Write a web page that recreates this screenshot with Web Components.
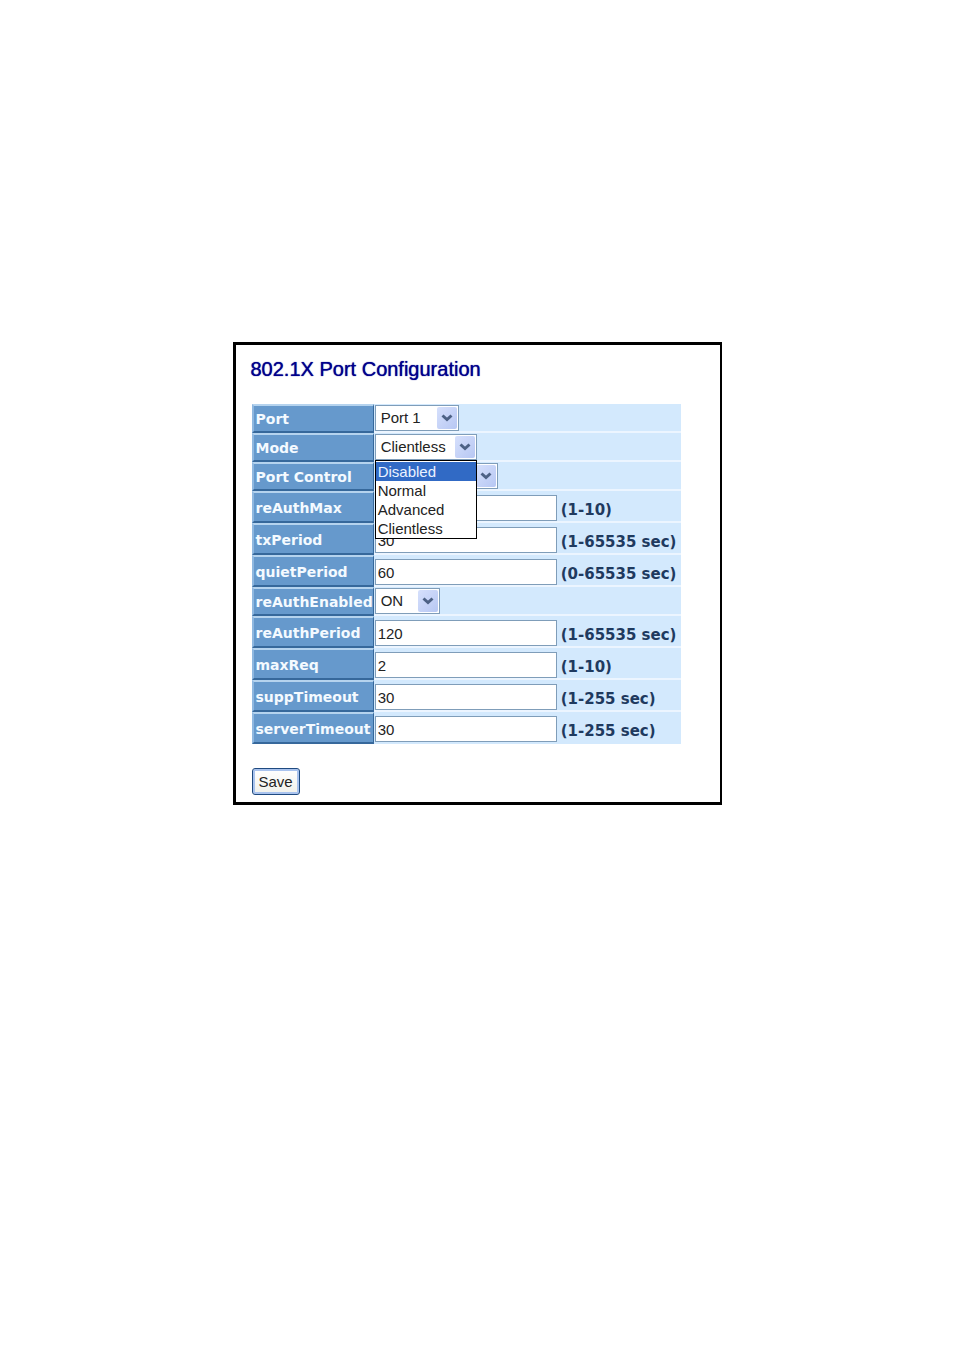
<!DOCTYPE html>
<html lang="en">
<head>
<meta charset="utf-8">
<meta name="viewport" content="width=device-width, initial-scale=1">
<title>802.1X Port Configuration</title>
<style>
    body {
        margin: 0;
        padding: 342px 16px 0;
        background: #fff;
        color: #222;
        font: 15px/18px "Liberation Sans", Arial, sans-serif;
    }
</style>
</head>
<body>
<config-panel heading="802.1X Port Configuration">
    <port-settings></port-settings>
    <save-button slot="actions">Save</save-button>
</config-panel>

<script>
class ConfigPanel extends HTMLElement {
    constructor() {
        super();
        this.attachShadow({ mode: 'open' });
    }

    connectedCallback() {
        this.shadowRoot.innerHTML = `
            <style>
                :host {
                    display: flex;
                    flex-direction: column;
                    box-sizing: border-box;
                    max-width: 489px;
                    margin: 0 auto;
                    padding: 12px 16px 7px;
                    border: 3px solid #000;
                    border-right-width: 2px;
                }
                h1 {
                    margin: 0 0 23px -1px;
                    font-size: 20px;
                    line-height: 24px;
                    font-weight: normal;
                    color: #00008b;
                    text-shadow: 0 0 1px #00008b;
                }
                .actions { margin-top: 24px; }
            </style>
            <h1>${this.getAttribute('heading')}</h1>
            <slot></slot>
            <div class="actions"><slot name="actions"></slot></div>
        `;
    }
}
customElements.define('config-panel', ConfigPanel);

class PortSettings extends HTMLElement {
    constructor() {
        super();
        this.attachShadow({ mode: 'open' });

        // size is the select width class, hint is the allowed range
        this.fields = [
            { name: 'Port', type: 'select', value: 'Port 1', size: 'medium' },
            { name: 'Mode', type: 'select', value: 'Clientless', size: 'large', open: true },
            { name: 'Port Control', type: 'select', value: '', size: 'wide' },
            { name: 'reAuthMax', type: 'text', value: '', hint: '(1-10)' },
            { name: 'txPeriod', type: 'text', value: '30', hint: '(1-65535 sec)' },
            { name: 'quietPeriod', type: 'text', value: '60', hint: '(0-65535 sec)' },
            { name: 'reAuthEnabled', type: 'select', value: 'ON', size: 'small' },
            { name: 'reAuthPeriod', type: 'text', value: '120', hint: '(1-65535 sec)' },
            { name: 'maxReq', type: 'text', value: '2', hint: '(1-10)' },
            { name: 'suppTimeout', type: 'text', value: '30', hint: '(1-255 sec)' },
            { name: 'serverTimeout', type: 'text', value: '30', hint: '(1-255 sec)' }
        ];
    }

    connectedCallback() { this.render(); }

    renderSelect(field, id) {
        const list = field.open
            ? '<option-list options="Disabled,Normal,Advanced,Clientless" active="Disabled"></option-list>'
            : '';
        return `
            <div class="select ${field.size}">
                <select id="${id}"><option>${field.value}</option></select>
                <svg viewBox="0 0 20 22" aria-hidden="true">
                    <defs>
                        <linearGradient id="face" x1="0" y1="0" x2="1" y2="1">
                            <stop offset="0" stop-color="#d6e0fc"/>
                            <stop offset="1" stop-color="#b7c7f3"/>
                        </linearGradient>
                    </defs>
                    <rect x="0" y="0" width="20" height="22" rx="2" fill="url(#face)"/>
                    <path d="M5.5 8.5 L10 12.5 L14.5 8.5" fill="none" stroke="#4d6185" stroke-width="3"/>
                </svg>
                ${list}
            </div>`;
    }

    renderText(field, id) {
        return `
            <div class="text">
                <input id="${id}" type="text" value="${field.value}" aria-describedby="${id}-hint">
                <span class="hint" id="${id}-hint">${field.hint}</span>
            </div>`;
    }

    render() {
        const rows = this.fields.map((field, idx) => {
            const id = `field-${idx}`;
            const control = field.type === 'select'
                ? this.renderSelect(field, id)
                : this.renderText(field, id);
            return `
                <tr class="${field.type}-row">
                    <th scope="row"><label for="${id}">${field.name}</label></th>
                    <td>${control}</td>
                </tr>`;
        }).join('');

        this.shadowRoot.innerHTML = `
            <style>
                :host { display: block; }

                table {
                    width: 429px;
                    max-width: 100%;
                    border-collapse: separate;
                    border-spacing: 0;
                }
                .select-row { height: 29px; }
                .text-row { height: 32px; }

                th, td { box-sizing: border-box; }
                th {
                    width: 120px;
                    padding: 0 0 0 2px;
                    border: 2px solid;
                    border-color: #b5d3ee #36689b #36689b #8fb8e0;
                    border-right-width: 1px;
                    background: #6699cc;
                    color: #f4faff;
                    font: bold 14px/18px "DejaVu Sans", Verdana, sans-serif;
                    text-align: left;
                    white-space: nowrap;
                }
                td {
                    padding: 0 0 0 1px;
                    border-bottom: 2px solid #ecf5ff;
                    background: #d3e9fd;
                }
                .text-row th { padding-top: 2px; }
                .text-row td { padding-top: 4px; }
                tr:last-child td { border-bottom-color: #d3e9fd; }

                /* the arrow face shares the last grid cell with the select */
                .select {
                    position: relative;
                    display: grid;
                    grid-template-columns: 1fr 22px;
                    align-items: center;
                    height: 26px;
                }
                .small { width: 65px; }
                .medium { width: 84px; }
                .large { width: 102px; }
                .wide { width: 123px; }

                select, input {
                    box-sizing: border-box;
                    height: 26px;
                    margin: 0;
                    border: 1px solid #7f9db9;
                    border-radius: 0;
                    background: #fff;
                    color: #222;
                    font: inherit;
                }
                select {
                    grid-area: 1 / 1 / 2 / 3;
                    width: 100%;
                    padding: 0 22px 0 5px;
                    appearance: none;
                }
                svg {
                    grid-area: 1 / 2;
                    z-index: 1;
                    width: 20px;
                    height: 22px;
                    pointer-events: none;
                }

                .text { display: flex; align-items: center; gap: 4px; }
                input { width: 182px; min-width: 0; padding: 0 2px; }
                .hint {
                    padding-top: 4px;
                    color: #1f3a5f;
                    font: bold 15px/18px "DejaVu Sans", Verdana, sans-serif;
                    white-space: nowrap;
                }
            </style>
            <table><tbody>${rows}</tbody></table>
        `;
    }
}
customElements.define('port-settings', PortSettings);

class OptionList extends HTMLElement {
    constructor() {
        super();
        this.attachShadow({ mode: 'open' });
    }

    connectedCallback() {
        const active = this.getAttribute('active');
        const items = this.getAttribute('options').split(',').map(name =>
            `<li role="option" aria-selected="${name === active}">${name}</li>`
        ).join('');

        this.shadowRoot.innerHTML = `
            <style>
                :host {
                    position: absolute;
                    top: 100%;
                    left: 0;
                    right: 0;
                    z-index: 2;
                    border: 1px solid #000;
                    background: #fff;
                }
                ul { margin: 0; padding: 1px 0 0; list-style: none; }
                li { padding: 0 2px; line-height: 19px; }
                li[aria-selected="true"] { background: #316ac5; color: #eaf2ff; }
            </style>
            <ul role="listbox" aria-label="Mode">${items}</ul>
        `;
    }
}
customElements.define('option-list', OptionList);

class SaveButton extends HTMLElement {
    constructor() {
        super();
        this.attachShadow({ mode: 'open' });
        this.shadowRoot.innerHTML = `
            <style>
                :host { display: inline-flex; vertical-align: top; }
                button {
                    height: 27px;
                    padding: 0 6px;
                    border: 1px solid #1f4a80;
                    border-radius: 3px;
                    background: linear-gradient(#fff, #f0f0ea);
                    box-shadow: inset 0 0 0 2px #a9c3ee;
                    color: #222;
                    font: inherit;
                }
            </style>
            <button type="button"><slot></slot></button>
        `;
    }
}
customElements.define('save-button', SaveButton);
</script>
</body>
</html>
